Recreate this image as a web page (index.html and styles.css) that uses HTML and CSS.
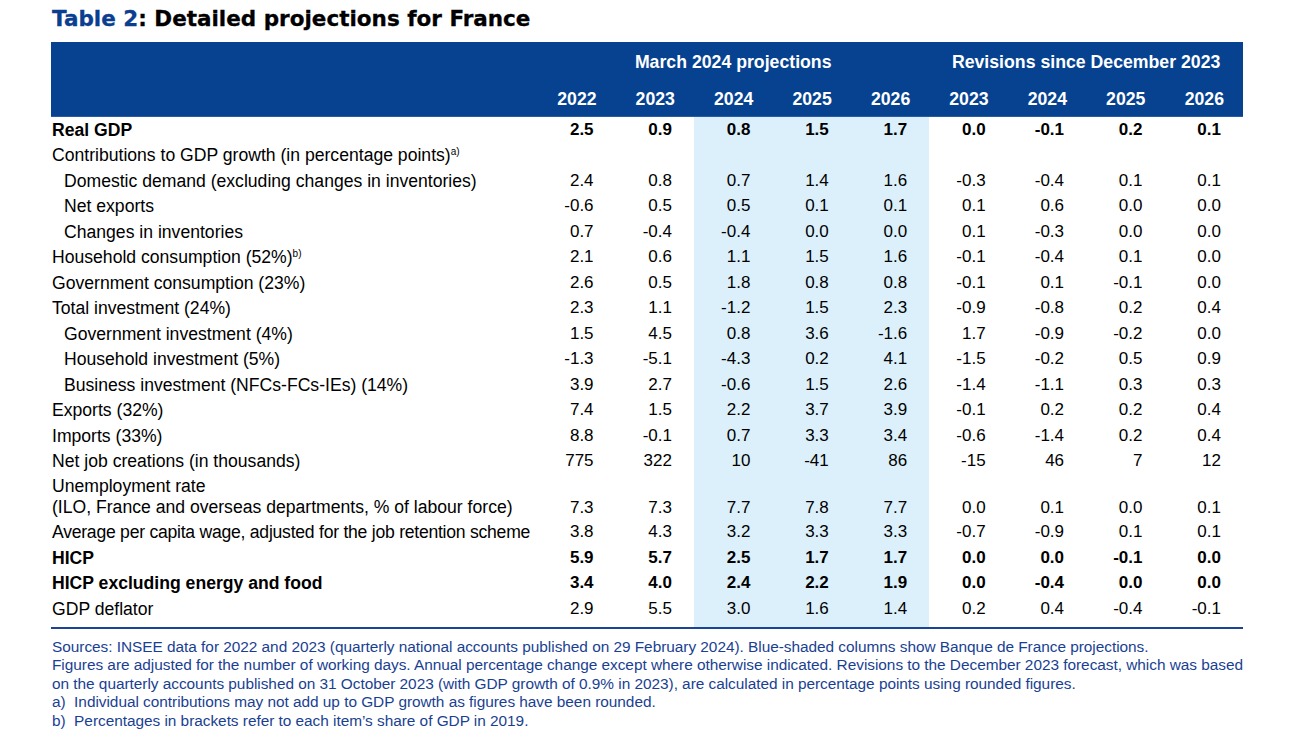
FILE: index.html
```html
<!DOCTYPE html>
<html lang="en">
<head>
<meta charset="utf-8">
<title>Table 2: Detailed projections for France</title>
<link rel="stylesheet" href="styles.css">
</head>
<body>
<div class="page">
  <h1 class="title"><span class="title-num">Table 2</span>: Detailed projections for France</h1>
  <table class="proj">
    <colgroup>
      <col class="c-label">
      <col class="c-num"><col class="c-num"><col class="c-num"><col class="c-num"><col class="c-num">
      <col class="c-num"><col class="c-num"><col class="c-num"><col class="c-num">
    </colgroup>
    <thead>
      <tr class="h1">
        <th></th>
        <th colspan="5" class="grp">March 2024 projections</th>
        <th colspan="4" class="grp">Revisions since December 2023</th>
      </tr>
      <tr class="h2">
        <th></th>
        <th>2022</th><th>2023</th><th>2024</th><th>2025</th><th>2026</th>
        <th>2023</th><th>2024</th><th>2025</th><th>2026</th>
      </tr>
    </thead>
    <tbody>
      <tr class="b"><td class="lbl">Real GDP</td><td>2.5</td><td>0.9</td><td class="sh">0.8</td><td class="sh">1.5</td><td class="sh">1.7</td><td>0.0</td><td>-0.1</td><td>0.2</td><td>0.1</td></tr>
      <tr><td class="lbl">Contributions to GDP growth (in percentage points)<sup>a)</sup></td><td></td><td></td><td class="sh"></td><td class="sh"></td><td class="sh"></td><td></td><td></td><td></td><td></td></tr>
      <tr><td class="lbl ind">Domestic demand (excluding changes in inventories)</td><td>2.4</td><td>0.8</td><td class="sh">0.7</td><td class="sh">1.4</td><td class="sh">1.6</td><td>-0.3</td><td>-0.4</td><td>0.1</td><td>0.1</td></tr>
      <tr><td class="lbl ind">Net exports</td><td>-0.6</td><td>0.5</td><td class="sh">0.5</td><td class="sh">0.1</td><td class="sh">0.1</td><td>0.1</td><td>0.6</td><td>0.0</td><td>0.0</td></tr>
      <tr><td class="lbl ind">Changes in inventories</td><td>0.7</td><td>-0.4</td><td class="sh">-0.4</td><td class="sh">0.0</td><td class="sh">0.0</td><td>0.1</td><td>-0.3</td><td>0.0</td><td>0.0</td></tr>
      <tr><td class="lbl">Household consumption (52%)<sup>b)</sup></td><td>2.1</td><td>0.6</td><td class="sh">1.1</td><td class="sh">1.5</td><td class="sh">1.6</td><td>-0.1</td><td>-0.4</td><td>0.1</td><td>0.0</td></tr>
      <tr><td class="lbl">Government consumption (23%)</td><td>2.6</td><td>0.5</td><td class="sh">1.8</td><td class="sh">0.8</td><td class="sh">0.8</td><td>-0.1</td><td>0.1</td><td>-0.1</td><td>0.0</td></tr>
      <tr><td class="lbl">Total investment (24%)</td><td>2.3</td><td>1.1</td><td class="sh">-1.2</td><td class="sh">1.5</td><td class="sh">2.3</td><td>-0.9</td><td>-0.8</td><td>0.2</td><td>0.4</td></tr>
      <tr><td class="lbl ind">Government investment (4%)</td><td>1.5</td><td>4.5</td><td class="sh">0.8</td><td class="sh">3.6</td><td class="sh">-1.6</td><td>1.7</td><td>-0.9</td><td>-0.2</td><td>0.0</td></tr>
      <tr><td class="lbl ind">Household investment (5%)</td><td>-1.3</td><td>-5.1</td><td class="sh">-4.3</td><td class="sh">0.2</td><td class="sh">4.1</td><td>-1.5</td><td>-0.2</td><td>0.5</td><td>0.9</td></tr>
      <tr><td class="lbl ind">Business investment (NFCs-FCs-IEs) (14%)</td><td>3.9</td><td>2.7</td><td class="sh">-0.6</td><td class="sh">1.5</td><td class="sh">2.6</td><td>-1.4</td><td>-1.1</td><td>0.3</td><td>0.3</td></tr>
      <tr><td class="lbl">Exports (32%)</td><td>7.4</td><td>1.5</td><td class="sh">2.2</td><td class="sh">3.7</td><td class="sh">3.9</td><td>-0.1</td><td>0.2</td><td>0.2</td><td>0.4</td></tr>
      <tr><td class="lbl">Imports (33%)</td><td>8.8</td><td>-0.1</td><td class="sh">0.7</td><td class="sh">3.3</td><td class="sh">3.4</td><td>-0.6</td><td>-1.4</td><td>0.2</td><td>0.4</td></tr>
      <tr><td class="lbl">Net job creations (in thousands)</td><td>775</td><td>322</td><td class="sh">10</td><td class="sh">-41</td><td class="sh">86</td><td>-15</td><td>46</td><td>7</td><td>12</td></tr>
      <tr class="two"><td class="lbl">Unemployment rate<br>(ILO, France and overseas departments, % of labour force)</td><td>7.3</td><td>7.3</td><td class="sh">7.7</td><td class="sh">7.8</td><td class="sh">7.7</td><td>0.0</td><td>0.1</td><td>0.0</td><td>0.1</td></tr>
      <tr><td class="lbl tight">Average per capita wage, adjusted for the job retention scheme</td><td>3.8</td><td>4.3</td><td class="sh">3.2</td><td class="sh">3.3</td><td class="sh">3.3</td><td>-0.7</td><td>-0.9</td><td>0.1</td><td>0.1</td></tr>
      <tr class="b"><td class="lbl">HICP</td><td>5.9</td><td>5.7</td><td class="sh">2.5</td><td class="sh">1.7</td><td class="sh">1.7</td><td>0.0</td><td>0.0</td><td>-0.1</td><td>0.0</td></tr>
      <tr class="b"><td class="lbl">HICP excluding energy and food</td><td>3.4</td><td>4.0</td><td class="sh">2.4</td><td class="sh">2.2</td><td class="sh">1.9</td><td>0.0</td><td>-0.4</td><td>0.0</td><td>0.0</td></tr>
      <tr class="last"><td class="lbl">GDP deflator</td><td>2.9</td><td>5.5</td><td class="sh">3.0</td><td class="sh">1.6</td><td class="sh">1.4</td><td>0.2</td><td>0.4</td><td>-0.4</td><td>-0.1</td></tr>
    </tbody>
  </table>
  <div class="notes">
    <p>Sources: INSEE data for 2022 and 2023 (quarterly national accounts published on 29 February 2024). Blue-shaded columns show Banque de France projections.</p>
    <p>Figures are adjusted for the number of working days. Annual percentage change except where otherwise indicated. Revisions to the December 2023 forecast, which was based on the quarterly accounts published on 31 October 2023 (with GDP growth of 0.9% in 2023), are calculated in percentage points using rounded figures.</p>
    <p>a)&nbsp; Individual contributions may not add up to GDP growth as figures have been rounded.</p>
    <p>b)&nbsp; Percentages in brackets refer to each item’s share of GDP in 2019.</p>
  </div>
</div>
</body>
</html>
```

FILE: styles.css
```css
html, body {
  margin: 0;
  padding: 0;
  background: #ffffff;
}

.page {
  padding: 6px 0 0 51px;
  width: 1192px;
  font-family: "Liberation Sans", Arial, sans-serif;
  color: #000000;
}

.title {
  margin: 0;
  height: 36px;
  font-family: "DejaVu Sans", "Liberation Sans", sans-serif;
  font-size: 21.5px;
  line-height: 26px;
  font-weight: bold;
  color: #000000;
  padding-left: 1px;
  -webkit-text-stroke: 0.3px currentColor;
}

.title-num {
  color: #0b3d91;
}

.proj {
  width: 1192px;
  border-collapse: collapse;
  table-layout: fixed;
  font-size: 17px;
}

.c-label { width: 486px; }
.c-num { width: 78.4px; }

.proj thead th {
  background: #06428f;
  color: #ffffff;
  font-weight: bold;
  font-size: 17.7px;
  padding: 0;
}

.proj thead .h1 th {
  height: 36px;
  text-align: center;
  vertical-align: middle;
  padding-top: 2px;
}

.proj thead .h2 th {
  height: 34px;
  text-align: right;
  padding-right: 19px;
  padding-top: 2px;
  vertical-align: middle;
  border-bottom: 1px solid #2a5aa6;
}

.proj tbody td {
  height: 25.5px;
  padding: 0 22px 0 0;
  text-align: right;
  vertical-align: middle;
  line-height: 20px;
  white-space: nowrap;
}

.proj tbody td.lbl {
  text-align: left;
  padding-left: 1px;
  font-size: 17.6px;
}

.proj tbody td.ind {
  padding-left: 13px;
}

.proj tbody td.tight {
  letter-spacing: -0.25px;
}

.proj tbody td.sh {
  background: #dcf0fb;
}

.proj tbody tr.b td {
  font-weight: bold;
}

.proj tbody tr.two td {
  height: 43.5px;
  line-height: 21px;
  vertical-align: bottom;
  padding-bottom: 2px;
}

.proj tbody tr.last td {
  height: 25.5px;
  padding-bottom: 5px;
  border-bottom: 2px solid #1b4495;
}

.proj sup {
  font-size: 10px;
  line-height: 0;
  vertical-align: 6px;
}

.notes {
  width: 1200px;
  padding-top: 9px;
  color: #1a3f92;
  font-size: 15.4px;
  line-height: 18.5px;
  letter-spacing: -0.03px;
}

.notes p {
  margin: 0;
  padding-left: 1px;
}
```
